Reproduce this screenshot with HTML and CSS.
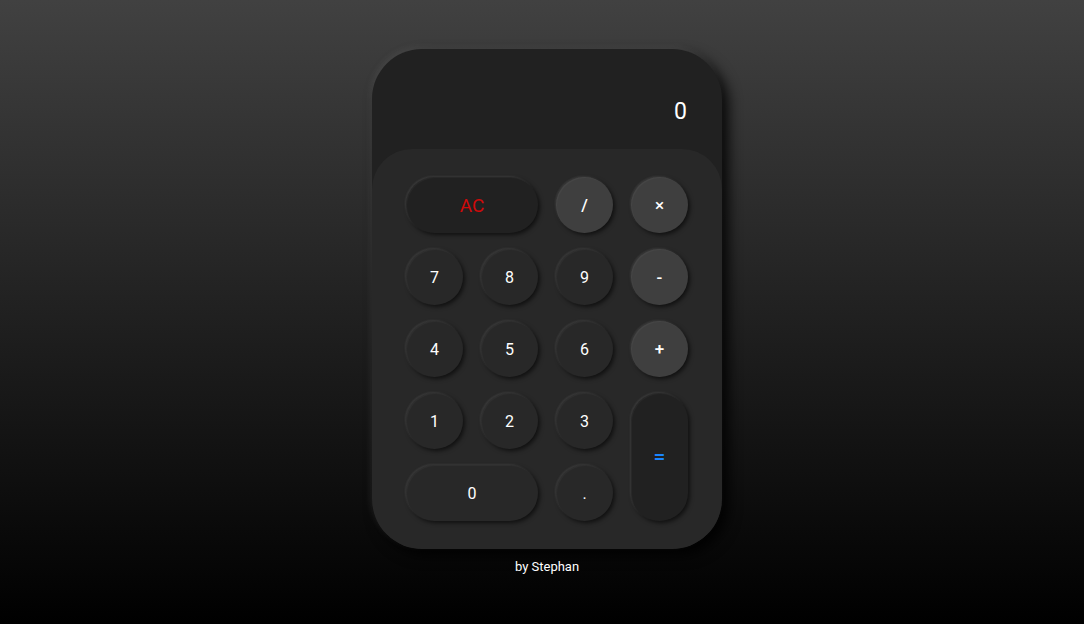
FILE: index.html
```html
<!DOCTYPE html>
<html>
<head>
<meta charset="utf-8">
<link rel="stylesheet" href="styles.css">
</head>
<body>
<main class="page">
  <div class="calc">
    <div class="display"><span class="value">0</span></div>
    <div class="keypad">
      <button class="key key-ac wide">AC</button>
      <button class="key key-op">/</button>
      <button class="key key-op">×</button>
      <button class="key">7</button>
      <button class="key">8</button>
      <button class="key">9</button>
      <button class="key key-op">-</button>
      <button class="key">4</button>
      <button class="key">5</button>
      <button class="key">6</button>
      <button class="key key-op">+</button>
      <button class="key">1</button>
      <button class="key">2</button>
      <button class="key">3</button>
      <button class="key key-eq tall">=</button>
      <button class="key wide">0</button>
      <button class="key">.</button>
    </div>
  </div>
  <p class="credit">by Stephan</p>
</main>
</body>
</html>
```

FILE: styles.css
```css
html, body {
  margin: 0;
  height: 100%;
}
body {
  background: linear-gradient(to bottom, #414141 0%, #000000 100%);
  font-family: Roboto, "Liberation Sans", sans-serif;
  color: #fff;
}
.page {
  display: flex;
  flex-direction: column;
  align-items: center;
  padding: 49px 0 0 10px;
  box-sizing: border-box;
  height: 100%;
}
.calc {
  width: 350px;
  height: 500px;
  border-radius: 50px;
  background: #212121;
  box-shadow: -2px -2px 6px rgba(255,255,255,0.08), 6px 6px 14px rgba(0,0,0,0.9);
  display: flex;
  flex-direction: column;
  overflow: hidden;
}
.display {
  height: 100px;
  display: flex;
  justify-content: flex-end;
  align-items: flex-end;
  padding: 0 35px 23px 0;
  box-sizing: border-box;
}
.value {
  font-size: 23px;
  line-height: 28px;
}
.keypad {
  flex: 1;
  background: #282828;
  border-radius: 40px 40px 50px 50px;
  display: grid;
  grid-template-columns: repeat(4, 57px);
  grid-template-rows: repeat(5, 56px);
  column-gap: 18px;
  row-gap: 16px;
  justify-content: center;
  padding: 28px 0 0 0;
  box-sizing: border-box;
}
.key {
  border: none;
  border-radius: 28px;
  background: #282828;
  color: #fff;
  font-family: Roboto, "Liberation Sans", sans-serif;
  font-size: 16px;
  padding: 0;
  box-shadow: -1px -1px 2px rgba(255,255,255,0.09), 2px 2px 4px rgba(0,0,0,0.6), inset 1px 1px 1px rgba(255,255,255,0.04);
}
.key-op {
  background: #3f3f3f;
  font-weight: 500;
  font-size: 17px;
}
.key-ac {
  background: #212121;
  color: #d00a0a;
  font-size: 19px;
}
.key-eq {
  background: #212121;
  color: #1a85ff;
  font-size: 21px;
  font-weight: 500;
}
.wide {
  grid-column: span 2;
}
.tall {
  grid-row: span 2;
}
.credit {
  margin: 10px 0 0;
  font-size: 13px;
  line-height: 16px;
  font-weight: 400;
}
```
